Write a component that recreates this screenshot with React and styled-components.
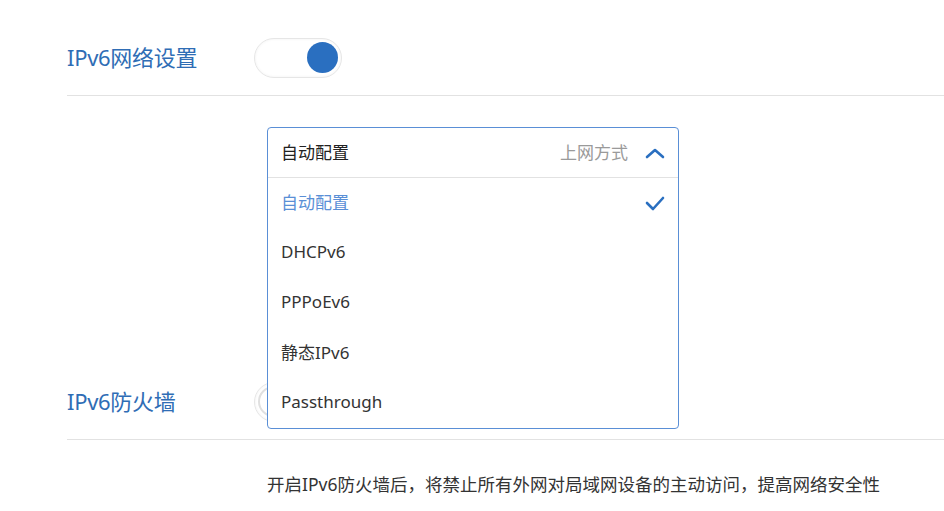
import styled, { createGlobalStyle } from "styled-components";

const blue = "#2a6fc0";
const labelBlue = "#2f6db5";
const lightBlue = "#5a8fd6";
const line = "#e2e2e2";
const text = "#333333";
const grey = "#9a9a9a";

const GlobalStyle = createGlobalStyle`
  body {
    margin: 0;
    background: #ffffff;
    font-family: "Noto Sans", "Noto Sans CJK SC", sans-serif;
    color: ${text};
  }
`;

const Page = styled.div`
  width: 944px;
  height: 511px;
  overflow: hidden;
  padding-left: 67px;
  box-sizing: border-box;
`;

const SettingRow = styled.div`
  display: flex;
  align-items: center;
  height: 75px;
  margin-top: ${(p) => p.top}px;
  border-bottom: 1px solid ${line};
`;

const Label = styled.div`
  width: 187px;
  padding-bottom: 4px;
  font-size: 22px;
  color: ${labelBlue};
  letter-spacing: -0.3px;
`;

const Toggle = styled.div`
  width: 88px;
  height: 40px;
  box-sizing: border-box;
  border: 1px solid #e6e6e6;
  border-radius: 20px;
  background: #fff;
  box-shadow: inset 0 0 3px rgba(0, 0, 0, 0.06);
  display: flex;
  align-items: center;
  justify-content: ${(p) => (p.on ? "flex-end" : "flex-start")};
  padding: 0 3px;
`;

const Knob = styled.div`
  width: 31px;
  height: 31px;
  border-radius: 50%;
  box-sizing: border-box;
  background: ${(p) => (p.on ? blue : "#fff")};
  border: ${(p) => (p.on ? "none" : "2px solid #e0e0e0")};
`;

const SelectField = styled.div`
  position: relative;
  width: 412px;
  height: 50px;
  margin: 31px 0 0 200px;
  z-index: 2;
`;

const Panel = styled.div`
  position: absolute;
  top: 0;
  left: 0;
  width: 412px;
  box-sizing: border-box;
  border: 1px solid ${lightBlue};
  border-radius: 4px;
  background: #fff;
`;

const Header = styled.div`
  display: flex;
  align-items: center;
  height: 49px;
  padding: 0 13px;
  border-bottom: 1px solid ${line};
  font-size: 17px;
`;

const Value = styled.span`
  flex: 1;
  color: #222;
  padding-bottom: 2px;
`;

const Hint = styled.span`
  color: ${grey};
  margin-right: 17px;
  padding-bottom: 2px;
`;

const Option = styled.div`
  display: flex;
  align-items: center;
  justify-content: space-between;
  height: 50px;
  padding: 0 13px 3px;
  box-sizing: border-box;
  font-size: 17px;
  color: ${(p) => (p.selected ? lightBlue : text)};

  & > svg {
    margin-top: 3px;
  }
`;

const Description = styled.p`
  margin: 31px 0 0 200px;
  font-size: 17.5px;
  color: ${text};
`;

const Chevron = () => (
  <svg width="20" height="12" viewBox="0 0 20 12">
    <path d="M2 10 L10 3 L18 10" fill="none" stroke={blue} strokeWidth="2.6" strokeLinecap="round" strokeLinejoin="round" />
  </svg>
);

const Check = () => (
  <svg width="20" height="16" viewBox="0 0 20 16">
    <path d="M2 8 L8 14 L18 3" fill="none" stroke={blue} strokeWidth="2.6" strokeLinecap="round" strokeLinejoin="round" />
  </svg>
);

const options = ["自动配置", "DHCPv6", "PPPoEv6", "静态IPv6", "Passthrough"];

export default function App() {
  const selected = "自动配置";
  return (
    <>
      <GlobalStyle />
      <Page>
        <SettingRow top={20}>
          <Label>IPv6网络设置</Label>
          <Toggle on>
            <Knob on />
          </Toggle>
        </SettingRow>

        <SelectField>
          <Panel>
            <Header>
              <Value>{selected}</Value>
              <Hint>上网方式</Hint>
              <Chevron />
            </Header>
            {options.map((o) => (
              <Option key={o} selected={o === selected}>
                {o}
                {o === selected && <Check />}
              </Option>
            ))}
          </Panel>
        </SelectField>

        <SettingRow top={187}>
          <Label>IPv6防火墙</Label>
          <Toggle>
            <Knob />
          </Toggle>
        </SettingRow>

        <Description>
          开启IPv6防火墙后，将禁止所有外网对局域网设备的主动访问，提高网络安全性
        </Description>
      </Page>
    </>
  );
}
